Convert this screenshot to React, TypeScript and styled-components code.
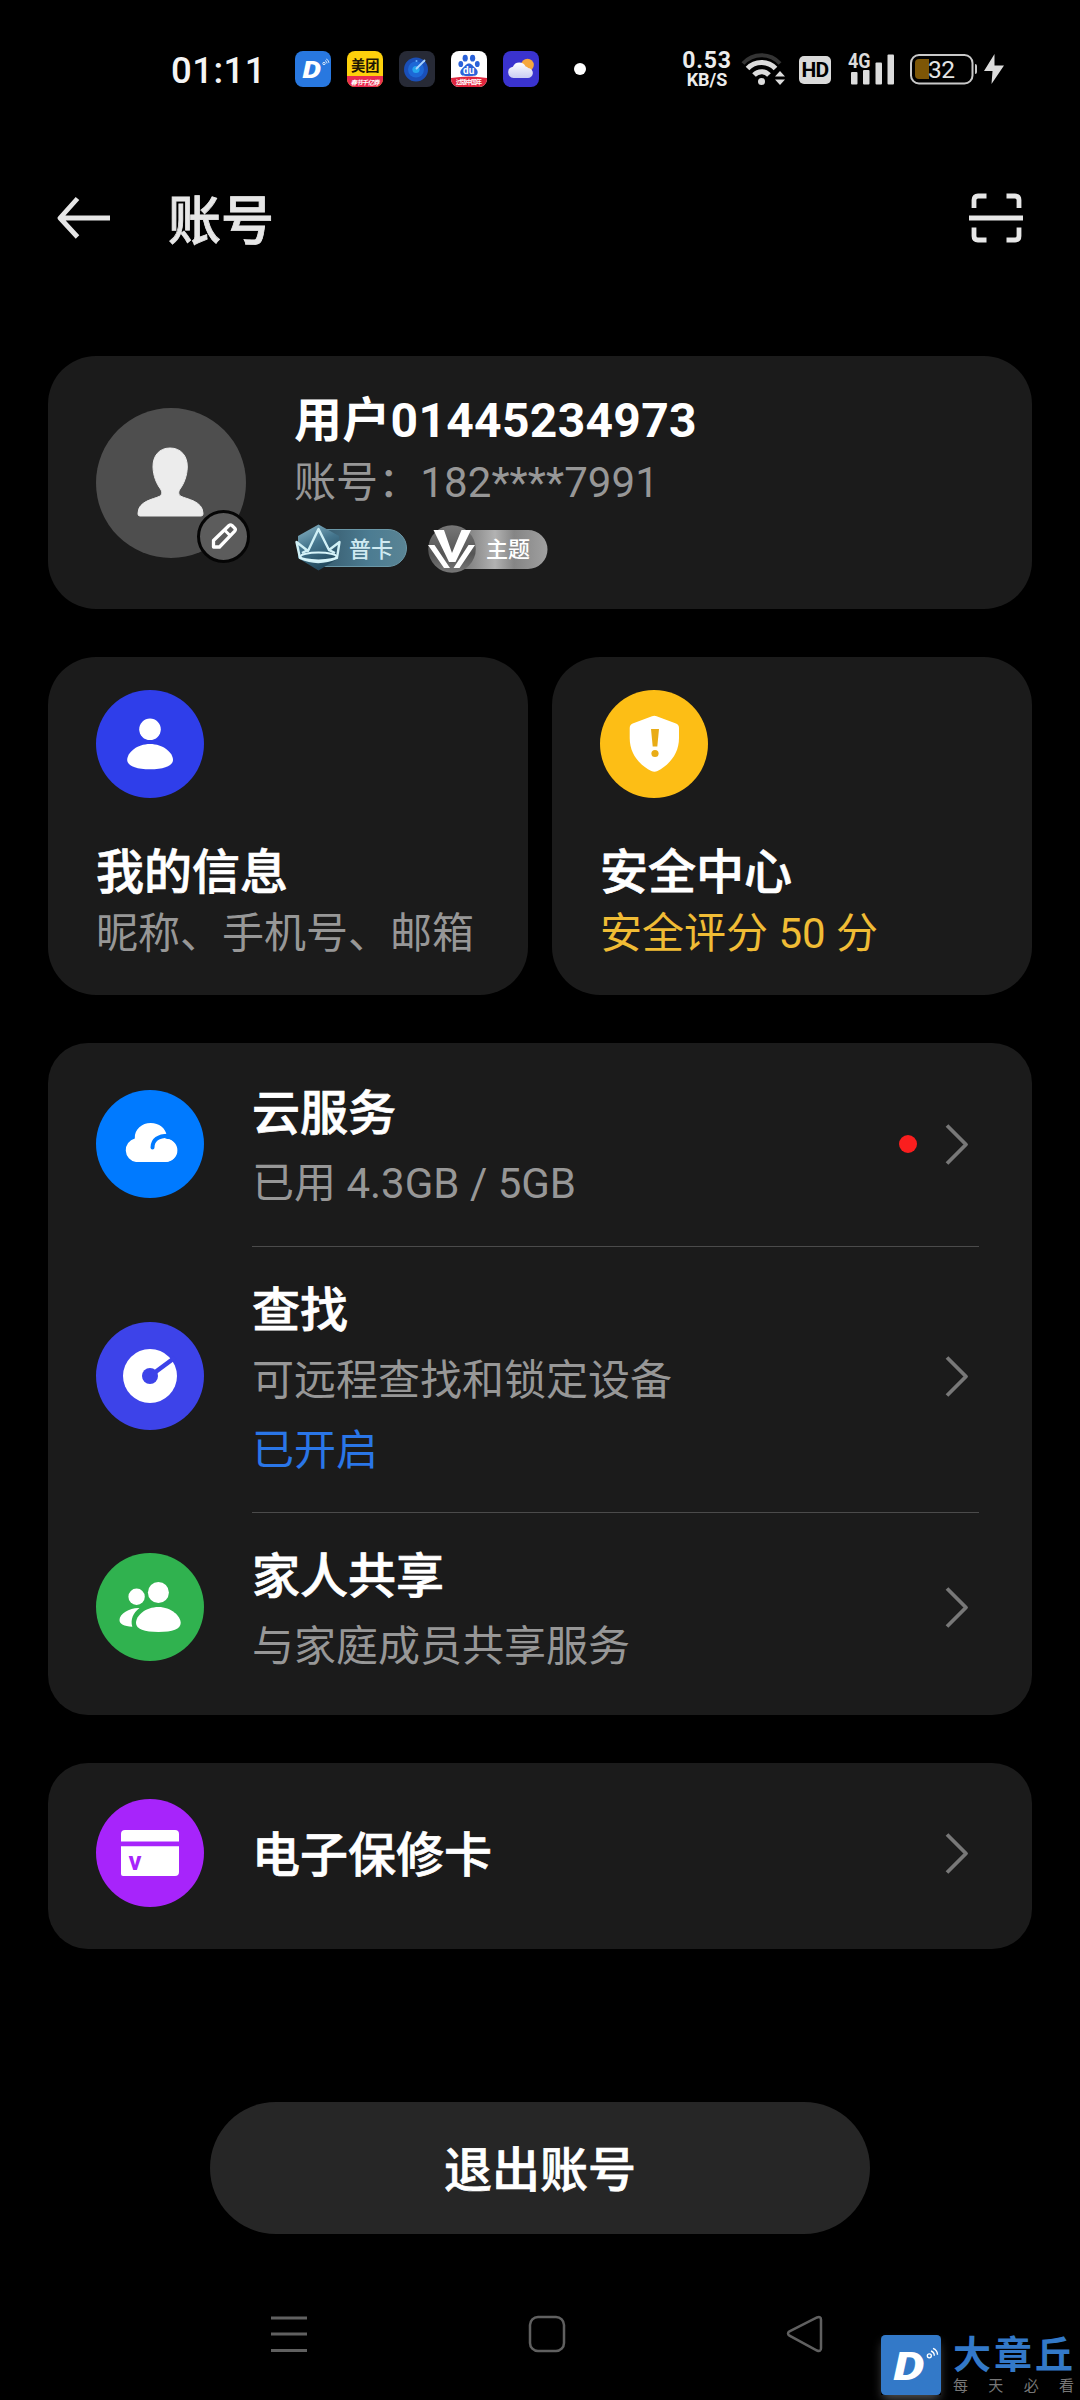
import React from "react";
import styled, { createGlobalStyle } from "styled-components";

const Global = createGlobalStyle`
  * { box-sizing: border-box; }
  html, body { margin: 0; background: #000; }
  body {
    font-family: Roboto, "Noto Sans CJK SC", sans-serif;
    color: #fff;
    -webkit-font-smoothing: antialiased;
  }
  svg { display: block; flex: none; }
`;

const Screen = styled.div`
  position: relative;
  width: 1080px;
  height: 2400px;
  background: #000;
  display: flex;
  flex-direction: column;
  overflow: hidden;
`;

/* ---------- status bar ---------- */

const StatusBar = styled.header`
  height: 138px;
  padding: 0 76px 0 171px;
  display: flex;
  align-items: center;
  flex: none;
`;

const Clock = styled.time`
  width: 124px;
  font-size: 36.5px;
  line-height: 40px;
  font-weight: 500;
  letter-spacing: 0.5px;
  padding-top: 3px;
  color: #f4f4f4;
`;

const AppIcons = styled.div`
  display: flex;
  gap: 16px;
`;

const MoreDot = styled.i`
  width: 12px;
  height: 12px;
  border-radius: 50%;
  background: #fff;
  margin-left: 35px;
`;

const SystemIcons = styled.div`
  margin-left: auto;
  display: flex;
  align-items: center;
  height: 36px;
`;

const Speed = styled.div`
  width: 52px;
  margin-right: 8px;
  padding-top: 2px;
  display: flex;
  flex-direction: column;
  align-items: center;
  font-weight: 700;
  color: #ececec;
`;

const SpeedValue = styled.span`
  font-size: 23px;
  line-height: 20px;
  letter-spacing: 0.8px;
`;

const SpeedUnit = styled.span`
  font-size: 18px;
  line-height: 18px;
`;

const HdBadge = styled.span`
  width: 32px;
  height: 28px;
  margin: 2px 17px 0 13px;
  border-radius: 5px;
  background: #dadada;
  color: #000;
  font-size: 21px;
  line-height: 29px;
  font-weight: 700;
  display: flex;
  justify-content: center;
  letter-spacing: -0.8px;
`;

/* ---------- page header ---------- */

const TitleBar = styled.div`
  height: 218px;
  padding: 55px 56px 0 57px;
  display: flex;
  align-items: flex-start;
  flex: none;
`;

const PageTitle = styled.h1`
  margin: -6px 0 0 55px;
  flex: 1;
  font-size: 53px;
  line-height: 70px;
  font-weight: 500;
  color: #e6e6e6;
  -webkit-text-stroke: 0.8px #e6e6e6;
`;

/* ---------- cards ---------- */

const Main = styled.main`
  padding: 0 48px;
  display: flex;
  flex-direction: column;
`;

const Card = styled.section<{ $radius?: number }>`
  background: #1b1b1b;
  border-radius: ${(p) => p.$radius ?? 40}px;
  margin-bottom: 48px;
`;

const ProfileCard = styled(Card)`
  height: 253px;
  padding: 34px 48px;
  display: flex;
`;

const Avatar = styled.div`
  position: relative;
  width: 150px;
  height: 150px;
  margin: 18px 48px 0 0;
  flex: none;
`;

const EditBadge = styled.div`
  position: absolute;
  left: 101px;
  top: 102px;
`;

const ProfileText = styled.div`
  display: flex;
  flex-direction: column;
`;

const UserName = styled.strong`
  font-size: 48px;
  line-height: 62px;
  font-weight: 700;
  letter-spacing: 0.3px;
`;

const Account = styled.span`
  font-size: 42px;
  line-height: 60px;
  margin-top: 1px;
  letter-spacing: 0.1px;
  color: #979797;
`;

const Badges = styled.div`
  display: flex;
  gap: 20px;
  margin: 11px 0 0 1px;
`;

const Badge = styled.div<{ $width: number }>`
  width: ${(p) => p.$width}px;
  height: 50px;
  display: grid;
  & > * { grid-area: 1 / 1; }
`;

const BadgeText = styled.span<{ $left: number; $color: string }>`
  padding-left: ${(p) => p.$left}px;
  font-size: 22px;
  line-height: 51px;
  font-weight: 500;
  color: ${(p) => p.$color};
`;

const Tiles = styled.div`
  display: grid;
  grid-template-columns: 1fr 1fr;
  gap: 24px;
`;

const Tile = styled(Card)`
  height: 338px;
  padding: 33px 48px 0;
  display: flex;
  flex-direction: column;
`;

const TileTitle = styled.h2`
  margin: 44px 0 0;
  font-size: 48px;
  line-height: 62px;
  font-weight: 500;
  -webkit-text-stroke: 0.7px #fff;
`;

const TileNote = styled.span<{ $color?: string }>`
  font-size: 42px;
  line-height: 60px;
  white-space: nowrap;
  color: ${(p) => p.$color ?? "#979797"};
`;

const Row = styled.div<{ $top: number; $bottom: number }>`
  display: flex;
  align-items: center;
  padding: ${(p) => p.$top}px 62px ${(p) => p.$bottom}px 48px;
`;

const RowText = styled.div<{ $top?: number; $bottom?: number }>`
  flex: 1;
  display: flex;
  flex-direction: column;
  padding: ${(p) => p.$top ?? 12}px 0 ${(p) => p.$bottom ?? 2}px 48px;
`;

const RowTitle = styled.h2`
  margin: 0;
  font-size: 48px;
  line-height: 70px;
  font-weight: 500;
  -webkit-text-stroke: 0.7px #fff;
`;

const RowNote = styled.span<{ $color?: string }>`
  font-size: 42px;
  line-height: 70px;
  color: ${(p) => p.$color ?? "#979797"};
`;

const Divider = styled.hr`
  height: 1px;
  border: 0;
  margin: 0 53px 0 204px;
  background: #4b4b4b;
`;

const RedDot = styled.i`
  width: 18px;
  height: 18px;
  border-radius: 50%;
  background: #fa1e1e;
  margin-right: 27px;
`;

const LogoutButton = styled.button`
  align-self: center;
  width: 660px;
  height: 132px;
  margin-top: 105px;
  border: 0;
  border-radius: 66px;
  background: #262626;
  color: #fff;
  font: 500 48px/132px Roboto, "Noto Sans CJK SC", sans-serif;
  -webkit-text-stroke: 0.7px #fff;
  padding: 3px 0 0;
`;

/* ---------- system navigation ---------- */

const NavBar = styled.nav`
  margin-top: 33px;
  padding: 0 256px 0 270px;
  display: flex;
  justify-content: space-between;
`;

const NavSpacer = styled.div`
  height: 48px;
`;

const Watermark = styled.aside`
  position: absolute;
  right: 0;
  bottom: 0;
  width: 205px;
  height: 70px;
  display: flex;
  gap: 12px;
`;

const WatermarkLogo = styled.div`
  width: 60px;
  height: 60px;
  margin: 5px 0 0 6px;
  flex: none;
  box-shadow: 0 6px 10px -2px rgba(150, 150, 150, 0.55);
`;

const WatermarkText = styled.div`
  width: 126px;
  display: flex;
  flex-direction: column;
  padding-top: 4px;
`;

const WatermarkName = styled.span`
  font-size: 38px;
  line-height: 42px;
  letter-spacing: 3px;
  font-weight: 700;
  color: #3379c8;
  white-space: nowrap;
`;

const WatermarkSlogan = styled.span`
  width: 121px;
  display: flex;
  justify-content: space-between;
  font-size: 15px;
  line-height: 20px;
  color: #777;
`;

/* ---------- drawings ---------- */

const DLogo = ({ size, color }: { size: number; color: string }) => (
  <svg width={size} height={size} viewBox="0 0 36 36">
    <rect width="36" height="36" rx={size > 40 ? 2.5 : 8} fill={color} />
    <text x="7.5" y="27.300" fontSize="23" fontWeight="900" fontStyle="italic" fontFamily="Roboto, sans-serif" fill="#fff" textLength="18.500" lengthAdjust="spacingAndGlyphs">D</text>
    <circle cx="29" cy="12.5" r="1.2" fill="none" stroke="#fff" strokeWidth=".8" />
    <path d="M30 9.6q2 .7 2 2.8M31.2 8q2.6 1 2.7 3.8" fill="none" stroke="#fff" strokeWidth=".8" />
  </svg>
);

const MeituanIcon = () => (
  <svg width="36" height="36" viewBox="0 0 36 36">
    <defs><clipPath id="mt"><rect width="36" height="36" rx="8" /></clipPath></defs>
    <g clipPath="url(#mt)">
      <rect width="36" height="36" fill="#fdd00c" />
      <rect y="25" width="36" height="11" fill="#e92c50" />
      <text x="4" y="19.5" fontSize="14.3" fontWeight="700" fill="#1d1603">美团</text>
      <text x="3.5" y="33.5" fontSize="6.500" fontWeight="700" fontStyle="italic" fill="#fff" textLength="29">春节千亿券</text>
    </g>
  </svg>
);

const RadarIcon = () => (
  <svg width="36" height="36" viewBox="0 0 36 36">
    <rect width="36" height="36" rx="8" fill="#272a36" />
    <circle cx="17" cy="18.5" r="12" fill="#1a4fb8" />
    <circle cx="17" cy="18.5" r="8" fill="#1d68d6" />
    <circle cx="17" cy="18.5" r="3.6" fill="#25a5ee" />
    <path d="M17.5 17.5 25.5 9.5" stroke="#a8d4ff" strokeWidth="1.8" strokeLinecap="round" />
    <circle cx="17.5" cy="10" r="1" fill="#66b5ff" />
  </svg>
);

const BaiduIcon = () => (
  <svg width="36" height="36" viewBox="0 0 36 36">
    <defs><clipPath id="bd"><rect width="36" height="36" rx="8" /></clipPath></defs>
    <g clipPath="url(#bd)">
      <rect width="36" height="36" fill="#fff" />
      <g fill="#2b62d9">
        <ellipse cx="14.2" cy="7.2" rx="2.6" ry="3.4" />
        <ellipse cx="21.6" cy="7.2" rx="2.6" ry="3.4" />
        <ellipse cx="9.8" cy="13" rx="2.4" ry="3.1" />
        <ellipse cx="26.3" cy="13" rx="2.4" ry="3.1" />
        <path d="M18 12.500c3 0 4 2.600 6 4.300 2.500 2 3.300 4 2.400 6-.9 2.200-3.400 2.200-8.400 2.200s-7.500 0-8.400-2.200c-.9-2 0-4 2.400-6 2-1.700 3-4.300 6-4.300z" />
      </g>
      <text x="12" y="23.300" fontSize="10" fontWeight="700" fontFamily="Roboto, sans-serif" fill="#fff">du</text>
      <path d="M0 27q18-3 36 0v9H0z" fill="#e0263e" />
      <text x="5" y="33.300" fontSize="6" fontWeight="700" fill="#fff" textLength="26">过版中国年</text>
    </g>
  </svg>
);

const WeatherIcon = () => (
  <svg width="36" height="36" viewBox="0 0 36 36">
    <defs>
      <linearGradient id="cl" x1="0" y1="0" x2="0" y2="1"><stop stopColor="#fff" /><stop offset="1" stopColor="#c9cdf3" /></linearGradient>
    </defs>
    <rect width="36" height="36" rx="8" fill="#3a33cf" />
    <circle cx="24.500" cy="14" r="6.300" fill="#f6a83e" />
    <path d="M10.500 27a5.700 5.700 0 0 1-.6-11.300A6.900 6.900 0 0 1 22.600 15.500a4.500 4.500 0 0 1 2.600 1.500A5 5 0 0 1 24.500 27z" fill="url(#cl)" />
  </svg>
);

const Wifi = () => (
  <svg width="45" height="36" viewBox="0 0 45 36">
    <g fill="none" strokeWidth="5">
      <path d="M2 12.500C12 1.500 29 1.500 39 12.500" stroke="#343434" strokeWidth="4" />
      <path d="M6.500 17.500c7.500-8 20.500-8 28 0" stroke="#dcdcdc" />
      <path d="M13 24c4.300-4.500 11-4.500 15 0" stroke="#dcdcdc" />
    </g>
    <circle cx="20.500" cy="30.500" r="3.500" fill="#dcdcdc" />
    <path d="M34 25.500 39 20l5 5.500zM34 28.500h10L39 34z" fill="#dcdcdc" />
  </svg>
);

const Signal = () => (
  <svg width="47" height="36" viewBox="0 0 47 36">
    <text x="0" y="17" fontSize="20" fontWeight="700" fontFamily="Roboto, sans-serif" fill="#dcdcdc" textLength="22.500" lengthAdjust="spacingAndGlyphs">4G</text>
    <g fill="#dcdcdc">
      <rect x="3" y="21" width="6.500" height="12.500" rx="1" />
      <rect x="15" y="19" width="6.500" height="14.500" rx="1" />
      <rect x="27.500" y="11.500" width="6.500" height="22" rx="1" />
      <rect x="39.500" y="3.500" width="6.500" height="30" rx="1" />
    </g>
  </svg>
);

const Battery = () => (
  <svg width="94" height="36" viewBox="0 0 94 36">
    <rect x="1" y="4" width="61.500" height="28.500" rx="8" fill="none" stroke="#c9c9c9" strokeWidth="2" />
    <path d="M9 8h10v20H9q-4 0-4-4V12q0-4 4-4z" fill="#7d5606" />
    <path d="M65 13q2 0 2 2v6q0 2-2 2z" fill="#c9c9c9" />
    <text x="18" y="27" fontSize="24.500" fontFamily="Roboto, sans-serif" fill="#e4e4e4" textLength="27">32</text>
    <path d="M84.500 3 74 20h8.500l-1 13L94 14.500h-9.500z" fill="#dcdcdc" />
  </svg>
);

const BatterySlot = styled.div`
  margin-left: 15px;
`;

const BackArrow = () => (
  <svg width="56" height="50" viewBox="0 0 56 50">
    <path d="M53 25H4M20.500 5.500 3 25l17.500 19" fill="none" stroke="#e6e6e6" strokeWidth="4.800" strokeLinejoin="round" />
  </svg>
);

const ScanIcon = () => (
  <svg width="55" height="50" viewBox="0 0 55 50">
    <path d="M5 15V7q0-4 4-4h8.500M37.500 3H46q4 0 4 4v8M5 34.500V43q0 4 4 4h8.500M37.500 47H46q4 0 4-4v-8.500M0 25h54" fill="none" stroke="#e6e6e6" strokeWidth="4.800" />
  </svg>
);

const AvatarIcon = () => (
  <svg width="150" height="150" viewBox="0 0 150 150">
    <circle cx="75" cy="75" r="75" fill="#4e4e4e" />
    <path d="M74 40c11 0 17.500 8 17.300 19-.2 9-3.500 17-7.300 22-2 3-1.500 6 1 7.300 6 3 22 4.700 22 17.200V106q0 2-2 2H44q-2 0-2-2v-.5c0-12.500 15.500-14.200 21.500-17.200 2.500-1.300 3-4.300 1-7.300-3.800-5-7.300-13-7.500-22C56.800 48 63 40 74 40z" fill="#ececec" stroke="#ececec" strokeLinejoin="round" />
  </svg>
);

const PencilIcon = () => (
  <svg width="53" height="53" viewBox="0 0 53 53">
    <circle cx="26.500" cy="26.500" r="25" fill="#5c5c5c" stroke="#050505" strokeWidth="3" />
    <path d="M16.500 37v-6.500L32 15.500q1.500-1.300 3 0l2.700 2.700q1.300 1.500 0 3L22.500 37z" fill="none" stroke="#fff" strokeWidth="3.300" strokeLinejoin="round" />
    <path d="m27.500 20 6 6" stroke="#fff" strokeWidth="3" />
  </svg>
);

const CrownBadge = () => (
  <svg width="113" height="50" viewBox="0 0 113 50">
    <defs>
      <linearGradient id="pk"><stop stopColor="#35586a" /><stop offset=".6" stopColor="#4c7c92" /><stop offset="1" stopColor="#5a8494" /></linearGradient>
      <linearGradient id="hx" x1="0" y1="0" x2=".4" y2="1"><stop stopColor="#8db8c8" /><stop offset=".5" stopColor="#44758d" /><stop offset="1" stopColor="#234a5e" /></linearGradient>
    </defs>
    <path d="M20 5.500h73a18.500 18.500 0 0 1 0 37H20z" fill="url(#pk)" stroke="#6b98a8" />
    <path d="M23.500.5 44 12v22L23.500 46.500 3 34V12z" fill="url(#hx)" />
    <path d="M1.500 18 5 34q18 8 37 0l2.500-16L34 26 23.500 5 13 27zM13 26 7 29M34 26l6 3" fill="none" stroke="#d0f0f6" strokeWidth="2.400" strokeLinejoin="round" />
    <ellipse cx="23.500" cy="32.500" rx="18" ry="4" fill="none" stroke="#d8f5fa" strokeWidth="2" />
  </svg>
);

const ThemeBadge = () => (
  <svg width="120" height="50" viewBox="0 0 120 50">
    <defs>
      <linearGradient id="zt"><stop stopColor="#666" /><stop offset=".45" stopColor="#b2b2b2" /><stop offset=".65" stopColor="#858585" /><stop offset="1" stopColor="#a0a0a0" /></linearGradient>
      <linearGradient id="zc" x1="0" y1="0" x2="0" y2="1"><stop stopColor="#777" /><stop offset=".6" stopColor="#555" /><stop offset="1" stopColor="#777" /></linearGradient>
    </defs>
    <path d="M24 6h76a19.500 19.500 0 0 1 0 39H24z" fill="url(#zt)" />
    <circle cx="24" cy="25" r="23.800" fill="url(#zc)" />
    <path d="M5.500 6H16l8 23 9.500-23H43L27.500 38h-6.500z" fill="#fff" />
    <path d="M0 21h6.500L22 44h-6zM47 21h-6.500L25.500 44h6z" fill="#fff" />
  </svg>
);

const Disc = ({ color, children }: { color: string; children: React.ReactNode }) => (
  <svg width="108" height="108" viewBox="0 0 108 108">
    <circle cx="54" cy="54" r="54" fill={color} />
    {children}
  </svg>
);

const PersonDisc = () => (
  <Disc color="#2f3eea">
    <circle cx="54" cy="39.300" r="10.800" fill="#fff" />
    <path d="M54 54c13 0 23 8.500 23 16 0 5.500-8.500 9.300-23 9.300S31.200 75.500 31.200 70c0-7.500 9.800-16 22.800-16z" fill="#fff" />
  </Disc>
);

const ShieldDisc = () => (
  <Disc color="#fdbe15">
    <path d="M52 26.300q2.300-1 4.600 0L76 33.500q3 1.200 3 4.500v10c0 16-10 27-21.500 33q-3 1.500-6.200 0C39.500 75 29.700 64 29.700 48V38q0-3.300 3-4.500z" fill="#fff" />
    <path d="M51 39h8l-1.700 17.500h-4.600z" fill="#e9ac16" />
    <circle cx="55" cy="63.500" r="3.600" fill="#e9ac16" />
  </Disc>
);

const CloudDisc = () => (
  <Disc color="#007aff">
    <path d="M40 72a12 12 0 0 1-1.200-23.500C38.500 39 46 33 54.700 33c8.500 0 14.800 5.200 16 12.500l-1.500 3.200A12 11.600 0 0 1 69.500 72z" fill="#fff" />
    <circle cx="69.300" cy="60.300" r="11.500" fill="#fff" />
    <path d="M56.500 57.500C56.500 50 62 45.300 73.500 45.700" fill="none" stroke="#007aff" strokeWidth="4" strokeLinecap="round" />
  </Disc>
);

const FindDisc = () => (
  <Disc color="#3d43e9">
    <circle cx="54" cy="54" r="27" fill="#fff" />
    <circle cx="54" cy="54" r="8" fill="#3d43e9" />
    <path d="M54 54 79 35.500" stroke="#3d43e9" strokeWidth="4.600" />
  </Disc>
);

const FamilyDisc = () => (
  <Disc color="#30b24f">
    <circle cx="40.600" cy="43.700" r="8.200" fill="#fff" />
    <circle cx="62.400" cy="39.500" r="10.500" fill="#fff" />
    <path d="M62.500 54C75 54 84.700 63 84.700 70c0 6-8 9-22.200 9S40 76 40 70c0-7.500 9.500-16 22.500-16z" fill="#fff" />
    <path d="M43.500 55C34 54.500 23.500 60.500 23.500 67c0 4 4.500 6.300 12.800 6.700-2-7 .7-13.700 7.200-18.700z" fill="#fff" />
  </Disc>
);

const WarrantyDisc = () => (
  <Disc color="#a724fb">
    <path d="M29 31h50q4 0 4 4v7.500H25V35q0-4 4-4zM25 47.300h58V73q0 4-4 4H27q-2 0-2-2z" fill="#fff" />
    <text x="32.500" y="71" fontSize="26" fontWeight="700" fontFamily="Roboto, sans-serif" fill="#a724fb" textLength="13" lengthAdjust="spacingAndGlyphs">v</text>
  </Disc>
);

const Chevron = () => (
  <svg width="26" height="44" viewBox="0 0 26 44">
    <path d="M3 3.500 22 22.500 3 41.500" fill="none" stroke="#787878" strokeWidth="3.800" strokeLinejoin="round" />
  </svg>
);

const MenuIcon = () => (
  <svg width="38" height="38" viewBox="0 0 38 38">
    <path d="M1 3h36M1 19h36M1 35.500h36" stroke="#606060" strokeWidth="3" />
  </svg>
);

const HomeIcon = () => (
  <svg width="38" height="38" viewBox="0 0 38 38">
    <rect x="2" y="2" width="34" height="34" rx="8" fill="none" stroke="#606060" strokeWidth="2.500" />
  </svg>
);

const BackIcon = () => (
  <svg width="38" height="38" viewBox="0 0 38 38">
    <path d="M3.500 16.300 31 2.500q4-1.500 4 2.200v28.600q0 3.700-4 2.200L3.500 20.700q-3-2.200 0-4.400z" fill="none" stroke="#606060" strokeWidth="2.500" />
  </svg>
);

export default function App() {
  return (
    <Screen>
      <Global />
      <StatusBar>
        <Clock>01:11</Clock>
        <AppIcons>
          <DLogo size={36} color="#2878e0" />
          <MeituanIcon />
          <RadarIcon />
          <BaiduIcon />
          <WeatherIcon />
        </AppIcons>
        <MoreDot />
        <SystemIcons>
          <Speed>
            <SpeedValue>0.53</SpeedValue>
            <SpeedUnit>KB/S</SpeedUnit>
          </Speed>
          <Wifi />
          <HdBadge>HD</HdBadge>
          <Signal />
          <BatterySlot><Battery /></BatterySlot>
        </SystemIcons>
      </StatusBar>

      <TitleBar>
        <BackArrow />
        <PageTitle>账号</PageTitle>
        <ScanIcon />
      </TitleBar>

      <Main>
        <ProfileCard $radius={48}>
          <Avatar>
            <AvatarIcon />
            <EditBadge><PencilIcon /></EditBadge>
          </Avatar>
          <ProfileText>
            <UserName>用户01445234973</UserName>
            <Account>账号：182****7991</Account>
            <Badges>
              <Badge $width={113}>
                <CrownBadge />
                <BadgeText $left={54} $color="#cfeaf2">普卡</BadgeText>
              </Badge>
              <Badge $width={120}>
                <ThemeBadge />
                <BadgeText $left={58} $color="#fff">主题</BadgeText>
              </Badge>
            </Badges>
          </ProfileText>
        </ProfileCard>

        <Tiles>
          <Tile $radius={48}>
            <PersonDisc />
            <TileTitle>我的信息</TileTitle>
            <TileNote>昵称、手机号、邮箱</TileNote>
          </Tile>
          <Tile $radius={48}>
            <ShieldDisc />
            <TileTitle>安全中心</TileTitle>
            <TileNote $color="#f0bc35">安全评分 50 分</TileNote>
          </Tile>
        </Tiles>

        <Card>
          <Row $top={24} $bottom={25}>
            <CloudDisc />
            <RowText>
              <RowTitle>云服务</RowTitle>
              <RowNote>已用 4.3GB / 5GB</RowNote>
            </RowText>
            <RedDot />
            <Chevron />
          </Row>
          <Divider />
          <Row $top={17} $bottom={24}>
            <FindDisc />
            <RowText>
              <RowTitle>查找</RowTitle>
              <RowNote>可远程查找和锁定设备</RowNote>
              <RowNote $color="#2a76e8">已开启</RowNote>
            </RowText>
            <Chevron />
          </Row>
          <Divider />
          <Row $top={17} $bottom={31}>
            <FamilyDisc />
            <RowText>
              <RowTitle>家人共享</RowTitle>
              <RowNote>与家庭成员共享服务</RowNote>
            </RowText>
            <Chevron />
          </Row>
        </Card>

        <Card>
          <Row $top={36} $bottom={42}>
            <WarrantyDisc />
            <RowText $top={5} $bottom={0}>
              <RowTitle>电子保修卡</RowTitle>
            </RowText>
            <Chevron />
          </Row>
        </Card>

        <LogoutButton>退出账号</LogoutButton>
      </Main>

      <NavSpacer />
      <NavBar>
        <MenuIcon />
        <HomeIcon />
        <BackIcon />
      </NavBar>

      <Watermark>
        <WatermarkLogo><DLogo size={60} color="#3379c8" /></WatermarkLogo>
        <WatermarkText>
          <WatermarkName>大章丘</WatermarkName>
          <WatermarkSlogan>
            <span>每</span>
            <span>天</span>
            <span>必</span>
            <span>看</span>
          </WatermarkSlogan>
        </WatermarkText>
      </Watermark>
    </Screen>
  );
}
